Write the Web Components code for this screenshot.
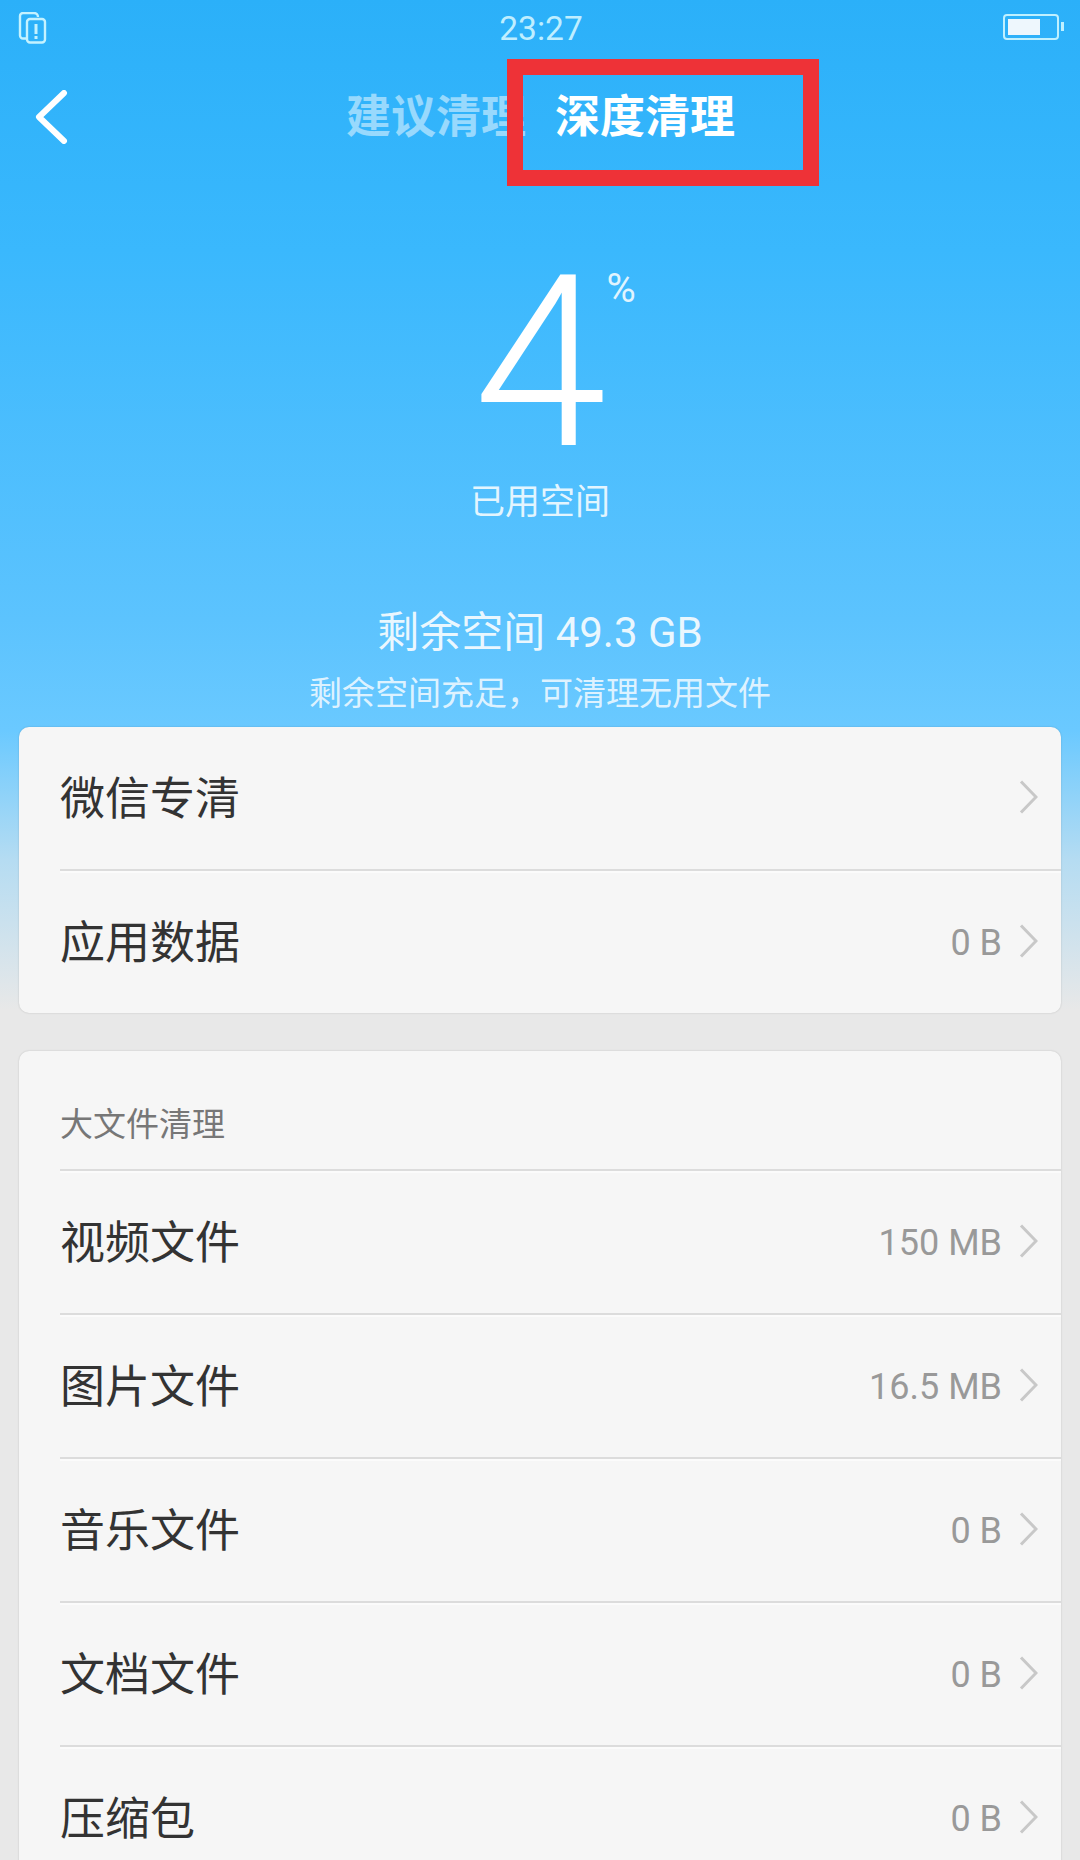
<!DOCTYPE html>
<html>

<head>
    <meta charset="utf-8">
    <title>深度清理</title>
    <style>
        html, body { margin: 0; height: 1860px; overflow: hidden; background: #e8e8e8; }
        body { font-family: Roboto, "Noto Sans CJK SC", sans-serif; }
    </style>
</head>

<body>
    <clean-page>
        <status-bar time="23:27"></status-bar>
        <clean-tabs></clean-tabs>
        <usage-summary percent="4" label="已用空间" free="剩余空间 49.3 GB" hint="剩余空间充足，可清理无用文件"></usage-summary>
        <clean-card>
            <clean-row title="微信专清"></clean-row>
            <clean-row title="应用数据" value="0 B"></clean-row>
        </clean-card>
        <clean-card heading="大文件清理">
            <clean-row title="视频文件" value="150 MB"></clean-row>
            <clean-row title="图片文件" value="16.5 MB"></clean-row>
            <clean-row title="音乐文件" value="0 B"></clean-row>
            <clean-row title="文档文件" value="0 B"></clean-row>
            <clean-row title="压缩包" value="0 B"></clean-row>
        </clean-card>
    </clean-page>

    <script>
        const CJK = 'Roboto, "Noto Sans CJK SC", sans-serif'

        class CleanPage extends HTMLElement {
            constructor() {
                super()
                this.attachShadow({ mode: 'open' }).innerHTML = `
                    <style>
                        :host {
                            display: block;
                            height: 1860px;
                            overflow: hidden;
                            background: linear-gradient(#2bb0f9 0, #3ab8fd 250px, #5cc3fe 620px, #6ac9ff 730px, #b5dcf2 860px, #e8e8e8 1010px);
                            font-family: ${CJK};
                        }
                    </style>
                    <slot></slot>
                `
            }
        }

        class StatusBar extends HTMLElement {
            constructor() {
                super()
                this.attachShadow({ mode: 'open' }).innerHTML = `
                    <style>
                        :host {
                            display: grid;
                            grid-template-columns: 1fr auto 1fr;
                            align-items: center;
                            height: 56px;
                            padding: 0 16px 0 18px;
                            color: #bfeeff;
                            font-size: 33.5px;
                        }
                        .right { justify-self: end; }
                        svg { display: block; }
                    </style>
                    <svg width="30" height="32" viewBox="0 0 30 32" fill="none" stroke="#c4f2ff" stroke-width="2.4">
                        <path d="M8 26.5H5a3 3 0 0 1-3-3V4a3 3 0 0 1 3-3h11a4 4 0 0 1 4 4"/>
                        <rect x="9" y="7" width="18" height="23.5" rx="3"/>
                        <path d="M18 12v10M18 24v3" stroke-width="3"/>
                    </svg>
                    <span>${this.getAttribute('time')}</span>
                    <svg class="right" width="61" height="28" viewBox="0 0 61 28">
                        <rect x="1" y="1" width="54" height="24" rx="3" fill="none" stroke="#bff0ff" stroke-width="2"/>
                        <rect x="5" y="5" width="32" height="16" fill="#eef7fd"/>
                        <rect x="58" y="8" width="3" height="9" fill="#bff0ff"/>
                    </svg>
                `
            }
        }

        class CleanTabs extends HTMLElement {
            constructor() {
                super()
                this.attachShadow({ mode: 'open' }).innerHTML = `
                    <style>
                        :host {
                            display: flex;
                            align-items: center;
                            position: relative;
                            height: 122px;
                            padding-left: 35px;
                            font-size: 45px;
                            font-weight: 700;
                            line-height: 1;
                        }
                        svg { display: block; flex: none; margin-right: 278px; }
                        .tab { width: 209px; white-space: nowrap; color: rgba(255, 255, 255, .5); }
                        .tab.on { color: #fff; }
                        /* the red annotation box lies over the tabs */
                        .mark {
                            position: absolute;
                            left: 507px;
                            top: 3px;
                            width: 312px;
                            height: 127px;
                            box-sizing: border-box;
                            border: 16px solid #ee3237;
                        }
                    </style>
                    <svg width="33" height="54" viewBox="0 0 33 54" fill="none" stroke="#fff" stroke-width="6" stroke-linecap="round" stroke-linejoin="round">
                        <path d="M29 3 4 27l25 24"/>
                    </svg>
                    <span class="tab">建议清理</span>
                    <span class="tab on">深度清理</span>
                    <div class="mark"></div>
                `
            }
        }

        class UsageSummary extends HTMLElement {
            constructor() {
                super()
                const a = n => this.getAttribute(n)
                this.attachShadow({ mode: 'open' }).innerHTML = `
                    <style>
                        :host {
                            display: flex;
                            flex-direction: column;
                            align-items: center;
                            height: 549px;
                            color: #fff;
                            text-align: center;
                        }
                        .num { position: relative; font-size: 240px; font-weight: 300; line-height: 200px; margin-top: 85px; height: 200px; }
                        .pct { position: absolute; left: 100%; top: 2px; margin-left: 0; font-size: 40px; line-height: 48px; font-weight: 400; color: rgba(255, 255, 255, .85); }
                        .label { font-size: 35px; line-height: 46px; margin-top: 17px; color: rgba(255, 255, 255, .85); }
                        .free { font-size: 42px; line-height: 50px; margin-top: 82px; color: rgba(255, 255, 255, .88); }
                        .hint { font-size: 33px; line-height: 44px; margin-top: 14px; color: rgba(255, 255, 255, .8); }
                    </style>
                    <div class="num">${a('percent')}<span class="pct">%</span></div>
                    <div class="label">${a('label')}</div>
                    <div class="free">${a('free')}</div>
                    <div class="hint">${a('hint')}</div>
                `
            }
        }

        class CleanCard extends HTMLElement {
            constructor() {
                super()
                const heading = this.getAttribute('heading')
                this.attachShadow({ mode: 'open' }).innerHTML = `
                    <style>
                        :host {
                            display: block;
                            margin: 0 19px 38px;
                            background: #f6f6f6;
                            border-radius: 10px;
                            box-shadow: 0 0 2px rgba(0, 0, 0, .18);
                        }
                        .head {
                            height: 118px;
                            box-sizing: border-box;
                            padding: 52px 0 0 41px;
                            font-size: 33px;
                            line-height: 44px;
                            color: #777;
                        }
                    </style>
                    ${heading ? `<div class="head">${heading}</div>` : ''}
                    <slot></slot>
                `
            }
        }

        class CleanRow extends HTMLElement {
            constructor() {
                super()
                const value = this.getAttribute('value') || ''
                this.attachShadow({ mode: 'open' }).innerHTML = `
                    <style>
                        :host {
                            display: block;
                            margin-left: 41px;
                            font-size: 45px;
                            color: #333;
                        }
                        :host(:not(:first-child)), :host-context(clean-card[heading]) {
                            border-top: 2px solid #dcdcdc;
                            box-shadow: inset 0 2px 0 #fbfbfb;
                        }
                        .row {
                            display: flex;
                            align-items: center;
                            height: 142px;
                            padding-right: 23px;
                        }
                        .title { flex: 1; padding-bottom: 6px; }
                        .value { font-size: 36px; color: #999; margin-right: 17px; padding-top: 2px; }
                        svg { display: block; flex: none; margin-top: -2px; }
                    </style>
                    <div class="row">
                        <span class="title">${this.getAttribute('title')}</span>
                        <span class="value">${value}</span>
                        <svg width="19" height="34" viewBox="0 0 19 34" fill="none" stroke="#c8c8c8" stroke-width="3">
                            <path d="M2 1.5 17 17 2 32.5"/>
                        </svg>
                    </div>
                `
            }
        }

        customElements.define('clean-page', CleanPage)
        customElements.define('status-bar', StatusBar)
        customElements.define('clean-tabs', CleanTabs)
        customElements.define('usage-summary', UsageSummary)
        customElements.define('clean-card', CleanCard)
        customElements.define('clean-row', CleanRow)
    </script>
</body>

</html>
